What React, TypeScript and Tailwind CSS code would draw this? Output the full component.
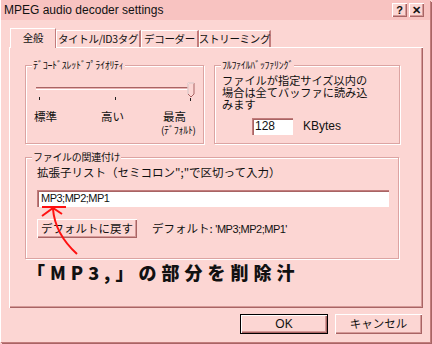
const JP = "font-['Noto_Sans_CJK_JP',sans-serif]";
const LAT = "font-['Liberation_Sans','Noto_Sans_CJK_JP',sans-serif]";

const RAISED = "shadow-[inset_1px_1px_0_#ffffff,inset_-1px_-1px_0_#a86464,inset_-2px_-2px_0_#d59a98]";
const SUNKEN = "shadow-[inset_1px_1px_0_#c27c7c,inset_2px_2px_0_#a86464,inset_-1px_-1px_0_#ffffff]";

function Group({ title, className, children }: { title: string; className: string; children: React.ReactNode }) {
  return (
    <div className={`relative border border-[#dca4a2] shadow-[inset_1px_1px_0_#ffffff,1px_1px_0_#ffffff] ${className}`}>
      <span className={`absolute -top-[7px] left-[6px] whitespace-nowrap bg-[#fcd6d3] px-[1px] text-[10px] leading-[12px] tracking-[-0.3px] ${JP}`}>
        {title}
      </span>
      {children}
    </div>
  );
}

const TABS = [
  { label: "全般", w: "w-[46px]" },
  { label: "タイトル/ID3タグ", w: "w-[85px]" },
  { label: "デコーダー", w: "w-[58px]" },
  { label: "ストリーミング", w: "w-[72px]" },
];

export default function App() {
  return (
    <div className="relative h-[344px] w-[432px] overflow-hidden bg-[#fcd6d3] text-[#111]">
      <div className="flex h-[342px] w-[430px] flex-col border-l border-white shadow-[1px_1px_0_#c27c7c,2px_2px_0_#a86464]">
        {/* title bar */}
        <div className="flex h-[20px] items-center bg-[#f8c3c1] pl-[3px] pr-[6px]">
          <span className={`text-[12px] leading-[14px] ${LAT}`}>MPEG audio decoder settings</span>
          <div className="ml-auto flex gap-[2px]">
            <span className={`flex h-[14px] w-[15px] items-center justify-center bg-[#fcd6d3] text-[11px] font-bold ${LAT} ${RAISED}`}>?</span>
            <span className={`flex h-[14px] w-[15px] items-center justify-center bg-[#fcd6d3] text-[11px] font-bold ${LAT} ${RAISED}`}>✕</span>
          </div>
        </div>

        {/* tabs */}
        <div className="mt-[8px] flex items-end pl-[9px]">
          {TABS.map((t, i) => (
            <div
              key={t.label}
              className={`${t.w} relative flex items-center justify-center whitespace-nowrap border-l border-t border-white bg-[#fcd6d3] text-[10.5px] tracking-[-0.3px] ${JP} ${
                i === 0
                  ? "z-10 -mb-px h-[20px] border-r border-r-[#c27c7c] pb-[2px]"
                  : "h-[17px] border-r-2 border-r-[#c27c7c] pb-[1px]"
              }`}
            >
              {t.label}
            </div>
          ))}
        </div>

        {/* panel */}
        <div className="ml-[8px] flex h-[261px] w-[414px] flex-col border-l border-t border-white pl-[15px] pt-[17px] shadow-[inset_-1px_-1px_0_#a86464,inset_-2px_-2px_0_#d59a98]">
          <div className="flex gap-[10px]">
            <Group title="ﾃﾞｺｰﾄﾞｽﾚｯﾄﾞﾌﾟﾗｲｵﾘﾃｨ" className="h-[79px] w-[179px]">
              <svg className="mt-[12px] block" width="177" height="24" viewBox="0 0 177 24">
                <rect x="10" y="9" width="157" height="3" fill="#e9b3b1" />
                <line x1="10" y1="9.5" x2="167" y2="9.5" stroke="#a86464" />
                <line x1="10" y1="11.5" x2="167" y2="11.5" stroke="#ffffff" />
                <path d="M162 5 H168 V16 L165 19 L162 16 Z" fill="#fcd6d3" stroke="#a86464" strokeWidth="1" />
                <path d="M162 16 V5 H168" fill="none" stroke="#ffffff" strokeWidth="1" />
                <line x1="13.5" y1="19" x2="13.5" y2="22" stroke="#222" />
                <line x1="89.5" y1="19" x2="89.5" y2="22" stroke="#222" />
                <line x1="164.5" y1="20" x2="164.5" y2="23" stroke="#222" />
              </svg>
              <div className={`mt-[7px] grid grid-cols-[67px_62px_auto] pl-[8px] text-[11.5px] leading-[14px] ${JP}`}>
                <span>標準</span>
                <span>高い</span>
                <span className="flex flex-col whitespace-nowrap">
                  <span>最高</span>
                  <span className="-ml-[2px] text-[10px] leading-[13px] tracking-[-0.3px]">(ﾃﾞﾌｫﾙﾄ)</span>
                </span>
              </div>
            </Group>

            <Group title="ﾌﾙﾌｧｲﾙﾊﾞｯﾌｧﾘﾝｸﾞ" className="h-[79px] w-[186px]">
              <p className={`whitespace-nowrap pl-[7px] pt-[8px] text-[11.2px] leading-[12px] ${JP}`}>
                ファイルが指定サイズ以内の
                <br />
                場合は全てバッファに読み込
                <br />
                みます
              </p>
              <div className="mt-[7px] flex items-center pl-[37px]">
                <div className={`flex h-[17px] w-[41px] items-center bg-white pl-[3px] text-[12px] ${LAT} ${SUNKEN}`}>128</div>
                <span className={`ml-[10px] text-[12px] ${LAT}`}>KBytes</span>
              </div>
            </Group>
          </div>

          <Group title="ファイルの関連付け" className="mt-[13px] h-[102px] w-[374px]">
            <div className="flex flex-col pl-[11px] pt-[7px]">
              <span className={`whitespace-nowrap text-[11.5px] leading-[14px] ${JP}`}>拡張子リスト（セミコロン";"で区切って入力）</span>
              <div className={`mt-[11px] flex h-[17px] w-[352px] items-center bg-white pl-[4px] text-[11px] tracking-[-0.5px] ${LAT} ${SUNKEN}`}>
                MP3;MP2;MP1
              </div>
              <div className="mt-[12px] flex items-center">
                <div className={`flex h-[19px] w-[100px] items-center justify-center whitespace-nowrap bg-[#fcd6d3] text-[11.5px] ${JP} ${RAISED}`}>
                  デフォルトに戻す
                </div>
                <span className={`ml-[15px] whitespace-nowrap text-[11.5px] ${JP}`}>
                  デフォルト: <span className={`text-[11px] tracking-[-0.5px] ${LAT}`}>'MP3;MP2;MP1'</span>
                </span>
              </div>
            </div>
          </Group>

          <p className={`ml-[2px] mt-[2px] whitespace-nowrap text-[18px] font-black leading-[22px] tracking-[5px] ${JP}`}>
            「MP3,」の部分を削除汁
          </p>
        </div>

        {/* buttons */}
        <div className="mt-[6px] flex justify-end gap-[7px] pr-[8px]">
          <div className="h-[20px] w-[88px] border border-black">
            <div className={`flex h-full w-full items-center justify-center bg-[#fcd6d3] text-[12px] ${LAT} ${RAISED}`}>OK</div>
          </div>
          <div className={`flex h-[20px] w-[87px] items-center justify-center bg-[#fcd6d3] text-[11.5px] ${JP} ${RAISED}`}>
            キャンセル
          </div>
        </div>
      </div>

      {/* red annotation */}
      <svg className="pointer-events-none absolute left-0 top-0" width="432" height="344" viewBox="0 0 432 344">
        <line x1="42" y1="207" x2="66" y2="207" stroke="#ff1010" strokeWidth="2" />
        <path d="M53 209 Q55 234 77 254" fill="none" stroke="#ff1010" strokeWidth="2" />
        <path d="M42 216 L53 208 L62 214" fill="none" stroke="#ff1010" strokeWidth="2" />
      </svg>
    </div>
  );
}
